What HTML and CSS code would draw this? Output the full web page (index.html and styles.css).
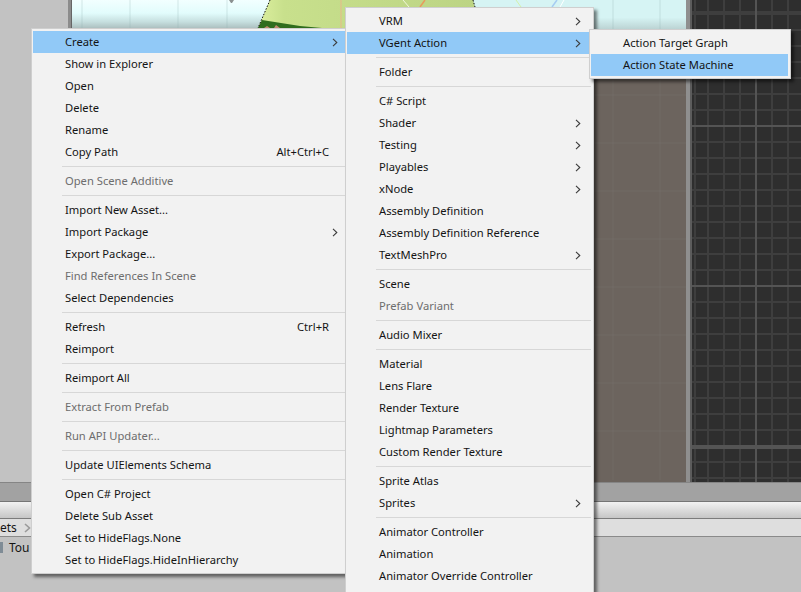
FILE: index.html

```html
<!DOCTYPE html>
<html lang="en">
<head>
  <meta charset="UTF-8">
  <title>Create menu</title>
  <link rel="stylesheet" href="styles.css">
</head>
<body>

<svg class="defs" width="0" height="0">
  <symbol id="chevron" viewBox="0 0 6 9">
    <path d="M1 .8 L4.8 4.5 L1 8.2" fill="none" stroke="#3c3c3c" stroke-width="1.1"/>
  </symbol>
</svg>

<div class="editor">
  <div class="panes">
    <div class="side"></div>
    <div class="divider-left"></div>

    <!-- scene view -->
    <svg class="scene" width="614" height="482" viewBox="72 0 614 482">
      <defs>
        <linearGradient id="sky" x1="0" y1="0" x2="0" y2="1">
          <stop offset="0" stop-color="#f2ffff"/>
          <stop offset=".45" stop-color="#e2fcfc"/>
          <stop offset=".75" stop-color="#c6dfdf"/>
          <stop offset="1" stop-color="#a9bcbc"/>
        </linearGradient>
        <linearGradient id="skyright" x1="0" y1="0" x2="0" y2="1">
          <stop offset="0" stop-color="#d6f4f4"/>
          <stop offset=".6" stop-color="#d6f4f4"/>
          <stop offset="1" stop-color="#bcd4d4"/>
        </linearGradient>
        <linearGradient id="land" x1="0" y1="0" x2="1" y2="0">
          <stop offset="0" stop-color="#dcef9e"/>
          <stop offset=".12" stop-color="#c8e08c"/>
          <stop offset="1" stop-color="#bcd484"/>
        </linearGradient>
      </defs>
      <rect x="72" y="0" width="614" height="482" fill="#6c645e"/>
      <rect x="72" y="0" width="400" height="29" fill="url(#sky)"/>
      <rect x="472" y="0" width="214" height="29" fill="url(#skyright)"/>
      <g stroke="#ffffff" stroke-opacity=".04">
        <path d="M82 80V480M130 80V480M178 80V480M227 80V480M275 80V480M613 80V480M660 80V480"/>
        <path d="M72 95H686M72 143H686M72 191H686M72 239H686M72 287H686M72 335H686M72 383H686M72 431H686"/>
      </g>
      <path d="M82 0V29M130 0V29M178 0V29M227 0V29M613 0V29M660 0V29" stroke="#8fb0b0" stroke-opacity=".3"/>
      <path d="M270 0L258 28H345L400 8H475L473 0Z" fill="url(#land)"/>
      <path d="M258 28L262 20L300 26L322 28Z" fill="#2f6d1e"/>
      <path d="M264 28l3-2 3 2zM274 28l2-3 4 3z" fill="#c08a70"/>
      <path d="M270 0L258 28" stroke="#111" stroke-dasharray="1.5 1.5" fill="none"/>
      <path d="M473 0L475 7" stroke="#111" stroke-dasharray="1.5 1.5" fill="none"/>
      <path d="M341 0V28" stroke="#dcc48a" stroke-width="1.5"/>
      <path d="M403 0L409 7" stroke="#f0f6d8"/>
      <path d="M425 0L420 7" stroke="#e89a5c" stroke-width="1.5"/>
      <path d="M516 0L521 7" stroke="#d6f0a8"/>
      <path d="M552 7L557 0" stroke="#a6ccf2" stroke-width="1.5"/>
      <path d="M560 7L564 0" stroke="#ffffff"/>
      <path d="M229 0h5l-2 3h-1z" fill="#8a9090"/>
    </svg>

    <div class="divider-right"></div>
    <div class="grid-view"></div>
  </div>

  <div class="strip"></div>
  <div class="tabs"></div>
  <div class="crumbs">
    <span>ets</span>
    <span class="crumb-sep">
      <svg width="7" height="10" viewBox="0 0 7 10"><path d="M1 1L5.5 5L1 9" fill="none" stroke="#9a9a9a" stroke-width="1.6"/></svg>
    </span>
  </div>
  <div class="files">
    <span class="file-icon"></span>
    <span>Tou</span>
  </div>
</div>

<div class="menu menu-main">
  <div class="item active"><span>Create</span><svg class="arrow"><use href="#chevron"/></svg></div>
  <div class="item"><span>Show in Explorer</span></div>
  <div class="item"><span>Open</span></div>
  <div class="item"><span>Delete</span></div>
  <div class="item"><span>Rename</span></div>
  <div class="item"><span>Copy Path</span><span class="shortcut">Alt+Ctrl+C</span></div>
  <div class="sep"></div>
  <div class="item off"><span>Open Scene Additive</span></div>
  <div class="sep"></div>
  <div class="item"><span>Import New Asset...</span></div>
  <div class="item"><span>Import Package</span><svg class="arrow"><use href="#chevron"/></svg></div>
  <div class="item"><span>Export Package...</span></div>
  <div class="item off"><span>Find References In Scene</span></div>
  <div class="item"><span>Select Dependencies</span></div>
  <div class="sep"></div>
  <div class="item"><span>Refresh</span><span class="shortcut">Ctrl+R</span></div>
  <div class="item"><span>Reimport</span></div>
  <div class="sep"></div>
  <div class="item"><span>Reimport All</span></div>
  <div class="sep"></div>
  <div class="item off"><span>Extract From Prefab</span></div>
  <div class="sep"></div>
  <div class="item off"><span>Run API Updater...</span></div>
  <div class="sep"></div>
  <div class="item"><span>Update UIElements Schema</span></div>
  <div class="sep"></div>
  <div class="item"><span>Open C# Project</span></div>
  <div class="item"><span>Delete Sub Asset</span></div>
  <div class="item"><span>Set to HideFlags.None</span></div>
  <div class="item"><span>Set to HideFlags.HideInHierarchy</span></div>
</div>

<div class="menu menu-create">
  <div class="item"><span>VRM</span><svg class="arrow"><use href="#chevron"/></svg></div>
  <div class="item active"><span>VGent Action</span><svg class="arrow"><use href="#chevron"/></svg></div>
  <div class="sep"></div>
  <div class="item"><span>Folder</span></div>
  <div class="sep"></div>
  <div class="item"><span>C# Script</span></div>
  <div class="item"><span>Shader</span><svg class="arrow"><use href="#chevron"/></svg></div>
  <div class="item"><span>Testing</span><svg class="arrow"><use href="#chevron"/></svg></div>
  <div class="item"><span>Playables</span><svg class="arrow"><use href="#chevron"/></svg></div>
  <div class="item"><span>xNode</span><svg class="arrow"><use href="#chevron"/></svg></div>
  <div class="item"><span>Assembly Definition</span></div>
  <div class="item"><span>Assembly Definition Reference</span></div>
  <div class="item"><span>TextMeshPro</span><svg class="arrow"><use href="#chevron"/></svg></div>
  <div class="sep"></div>
  <div class="item"><span>Scene</span></div>
  <div class="item off"><span>Prefab Variant</span></div>
  <div class="sep"></div>
  <div class="item"><span>Audio Mixer</span></div>
  <div class="sep"></div>
  <div class="item"><span>Material</span></div>
  <div class="item"><span>Lens Flare</span></div>
  <div class="item"><span>Render Texture</span></div>
  <div class="item"><span>Lightmap Parameters</span></div>
  <div class="item"><span>Custom Render Texture</span></div>
  <div class="sep"></div>
  <div class="item"><span>Sprite Atlas</span></div>
  <div class="item"><span>Sprites</span><svg class="arrow"><use href="#chevron"/></svg></div>
  <div class="sep"></div>
  <div class="item"><span>Animator Controller</span></div>
  <div class="item"><span>Animation</span></div>
  <div class="item"><span>Animator Override Controller</span></div>
</div>

<div class="menu menu-action">
  <div class="item"><span>Action Target Graph</span></div>
  <div class="item active"><span>Action State Machine</span></div>
</div>

</body>
</html>
```

FILE: styles.css

```css
html, body {
  margin: 0;
  height: 100%;
  overflow: hidden;
}
body {
  background: #c2c2c2;
  color: #141414;
  font-family: "Noto Sans", "Open Sans", sans-serif;
  font-size: 11.2px;
}
.defs {
  position: absolute;
}
.editor {
  display: flex;
  flex-direction: column;
  height: 592px;
  overflow: hidden;
}

/* panes behind the menus */
.panes {
  display: flex;
  height: 482px;
  flex: none;
}
.side {
  width: 68px;
  background: #c2c2c2;
}
.divider-left {
  width: 4px;
  background: linear-gradient(to right, #8c8c8c 0 3px, #666 3px);
}
.scene {
  display: block;
  flex: none;
}
.divider-right {
  width: 6px;
  background: linear-gradient(to right, #8f8f8f 0 4px, #5c5c5c 4px);
}
.grid-view {
  flex: 1;
  background-color: #2e2e2e;
  background-image:
    repeating-linear-gradient(to right, #545454 0 2px, transparent 2px 160px),
    repeating-linear-gradient(to bottom, #545454 0 2px, transparent 2px 160px),
    repeating-linear-gradient(to right, #3e3e3e 0 2px, transparent 2px 16px),
    repeating-linear-gradient(to bottom, #3e3e3e 0 2px, transparent 2px 16px);
  background-position: 63px -35px, 0 -35px, 15px 0, 0 13px;
}
.strip {
  flex: none;
  height: 18px;
  background: #a2a2a2;
  border-top: 1px solid #858585;
  border-bottom: 1px solid #757575;
}
.tabs {
  flex: none;
  height: 16px;
  background: linear-gradient(to bottom, #f2f2f2, #c6c6c6);
  border-bottom: 1px solid #7c7c7c;
}
.crumbs {
  display: flex;
  flex: none;
  align-items: center;
  gap: 7px;
  height: 17px;
  background: #dedede;
  border-bottom: 1px solid #8a8a8a;
  font-size: 12px;
}
.crumb-sep {
  display: flex;
}
.files {
  display: flex;
  flex: none;
  align-items: center;
  gap: 6px;
  padding-top: 1px;
  height: 18px;
  font-size: 12px;
}
.file-icon {
  width: 3px;
  height: 11px;
  background: #7f8c96;
}

/* context menus */
.menu {
  position: absolute;
  box-sizing: border-box;
  padding: 2px 2px 2px 1px;
  background: #f2f2f2;
  border: 1px solid #cfcfcf;
  box-shadow: 3px 3px 3px rgba(0, 0, 0, 0.5);
}
.menu-main {
  left: 31px;
  top: 28px;
  width: 320px;
}
.menu-create {
  left: 345px;
  top: 7px;
  width: 249px;
  height: 585px;
  padding-bottom: 0;
  border-bottom: none;
  overflow: hidden;
}
.menu-action {
  left: 589px;
  top: 29px;
  width: 202px;
}
.item {
  display: flex;
  align-items: center;
  justify-content: space-between;
  height: 22px;
  padding: 0 10px 0 32px;
  line-height: 22px;
  white-space: nowrap;
}
.item.active {
  background: #91c9f7;
}
.item.off {
  color: #6d6d6d;
}
.shortcut {
  margin-right: 9px;
}
.arrow {
  width: 6px;
  height: 9px;
}
.sep {
  height: 1px;
  margin: 3px 0 3px 29px;
  background: #d7d7d7;
}
```
